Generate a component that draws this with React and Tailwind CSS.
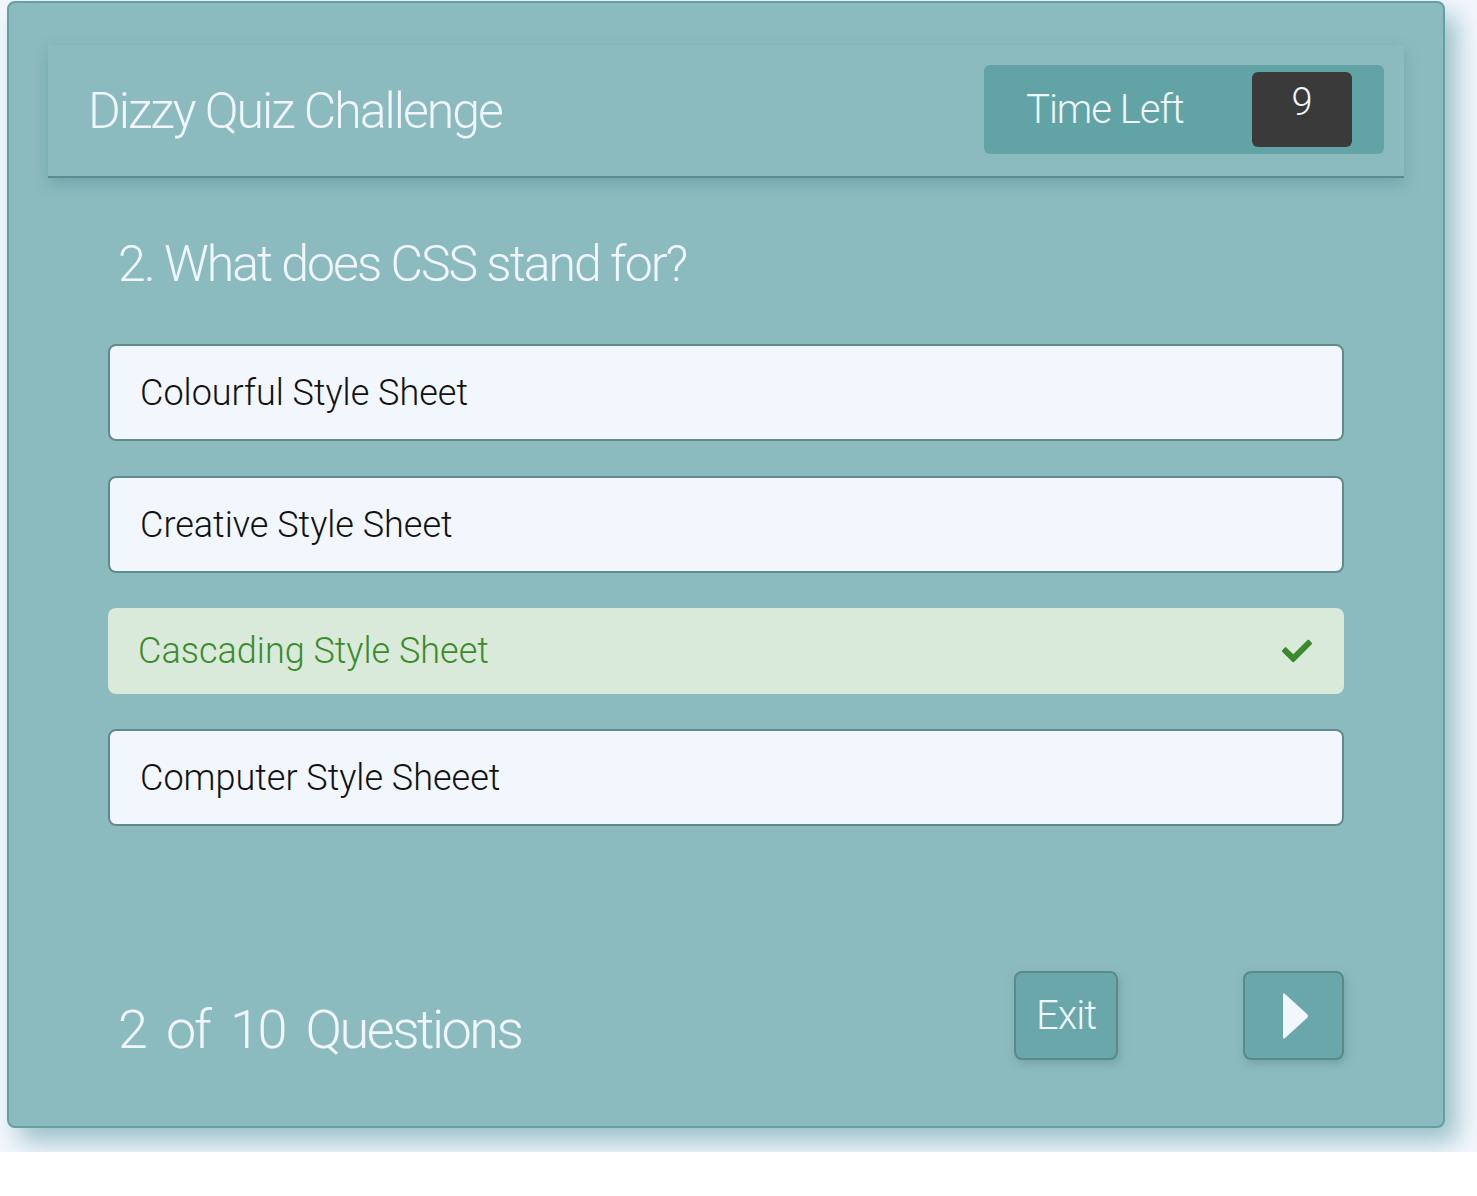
import React from 'react';
import { FaCheck } from 'react-icons/fa';

const options = [
  { text: 'Colourful Style Sheet' },
  { text: 'Creative Style Sheet' },
  { text: 'Cascading Style Sheet', correct: true },
  { text: 'Computer Style Sheeet' },
];

const font = { fontFamily: 'Roboto, "Open Sans", sans-serif' };

const Option = ({ text, correct }) => {
  if (correct) {
    return (
      <div className="flex items-center justify-between h-[86px] rounded-lg bg-[#d9eadb] pl-[30px] pr-[30px]">
        <span className="text-[36px] font-light text-[#3c8b2b]">{text}</span>
        <FaCheck className="w-[34px] h-[30px] text-[#3c8a2d]" />
      </div>
    );
  }
  return (
    <div className="flex items-center h-[97px] rounded-lg border-2 border-[#5f8c8b] bg-[#f2f7fd] pl-[30px]">
      <span className="text-[36px] font-light text-[#111]">{text}</span>
    </div>
  );
};

export default function App() {
  return (
    <div className="w-full h-[1152px] overflow-hidden bg-[#f3f7fd] pl-[7px] pt-[1px]" style={font}>
      <div className="w-[1438px] h-[1127px] rounded-lg border-2 border-[#62a0a2] bg-[#8cbbbf] shadow-[12px_14px_24px_rgba(120,170,180,0.7)] flex flex-col">
        {/* Header */}
        <div className="ml-[39px] mt-[42px] w-[1356px] h-[133px] border-b-2 border-[#5d8c8c] bg-[#8cbbbf] shadow-[0_6px_14px_rgba(80,140,145,0.45)] flex items-center justify-between pl-[40px] pr-[20px]">
          <h1 className="text-[50px] font-light tracking-[-2px] text-[#f0f6fc] leading-none">Dizzy Quiz Challenge</h1>
          <div className="flex items-center w-[400px] h-[89px] rounded-md bg-[#62a3a5] pl-[42px] pr-[32px] mt-[-2px]">
            <span className="text-[40px] font-light tracking-[-1px] text-[#f0f6fc] flex-1">Time Left</span>
            <div className="w-[100px] h-[75px] rounded-md bg-[#3a3a3a] flex justify-center pt-[11px]">
              <span className="text-[38px] font-light text-[#f0f6fc] leading-none">9</span>
            </div>
          </div>
        </div>

        {/* Question */}
        <h2 className="ml-[109px] mt-[56px] text-[50px] font-light tracking-[-2px] text-[#f0f6fc] leading-[60px]">
          2. What does CSS stand for?
        </h2>

        <div className="ml-[99px] mt-[50px] w-[1236px] flex flex-col gap-[35px]">
          {options.map((o) => (
            <Option key={o.text} {...o} />
          ))}
        </div>

        {/* Footer */}
        <div className="ml-[109px] mt-[135px] w-[1226px] flex items-center">
          <span className="mt-[28px] text-[54px] font-light tracking-[-2.5px] text-[#f0f6fc] [word-spacing:10px] flex-1">2 of 10 Questions</span>
          <button className="w-[104px] h-[89px] rounded-lg border-2 border-[#5a8a88] bg-[#6aa7aa] shadow-[2px_4px_10px_rgba(70,120,125,0.35)] text-[40px] font-light tracking-[-1px] text-[#f0f6fc]">
            Exit
          </button>
          <button className="ml-[125px] w-[101px] h-[89px] rounded-lg border-2 border-[#5a8a88] bg-[#6aa7aa] shadow-[2px_4px_10px_rgba(70,120,125,0.35)] flex items-center justify-center">
            <svg width="26" height="48" viewBox="0 0 26 48" className="ml-[4px]">
              <path d="M2 2 L24 22 Q26 24 24 26 L2 46 Q0 48 0 45 L0 3 Q0 0 2 2 Z" fill="#f2f7fd" />
            </svg>
          </button>
        </div>
      </div>
    </div>
  );
}
